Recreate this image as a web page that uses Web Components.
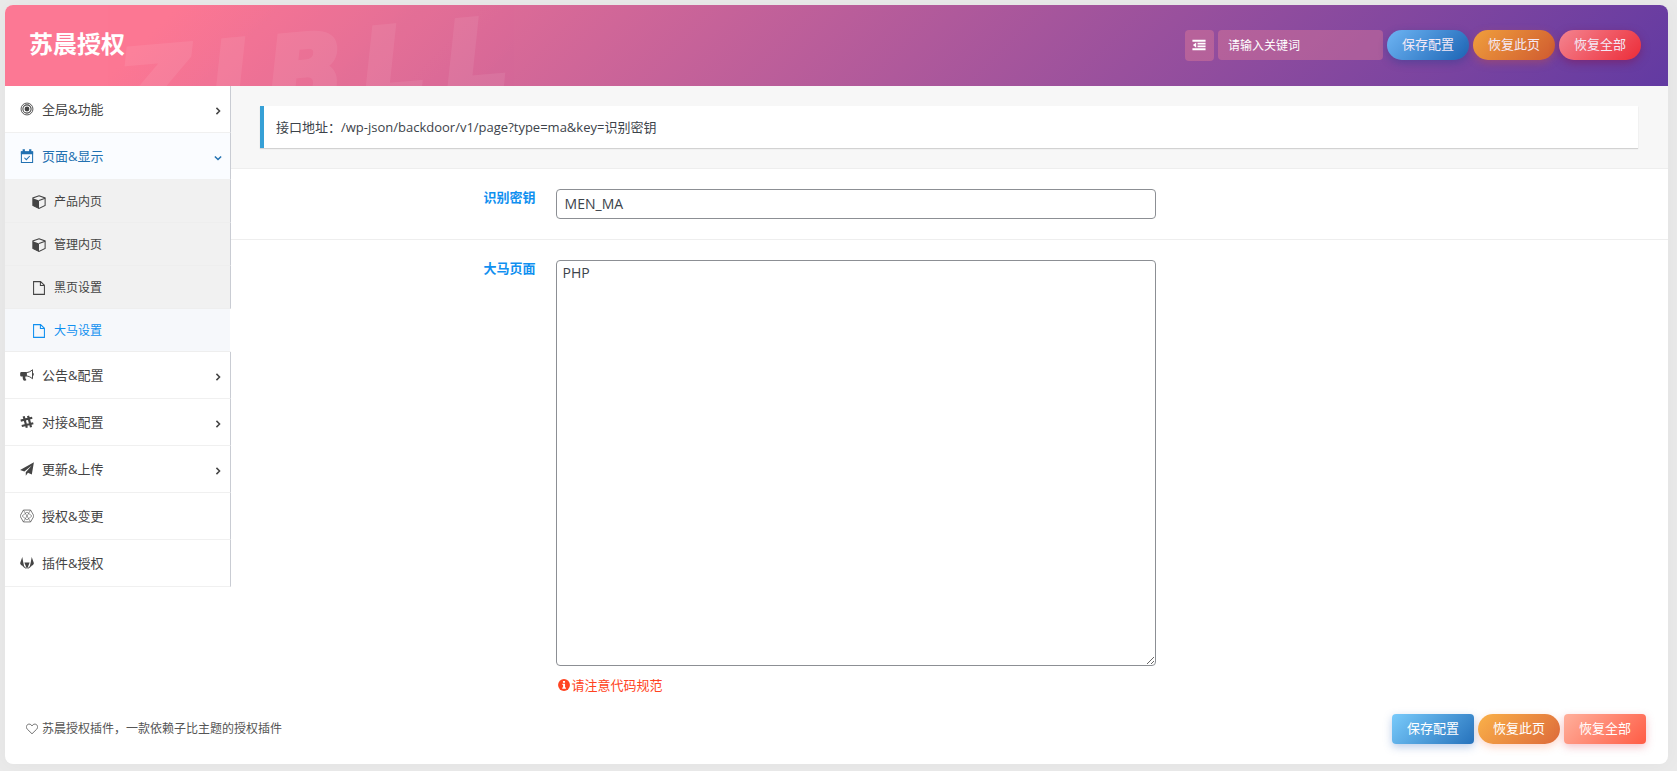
<!DOCTYPE html>
<html lang="zh-CN">
<head>
<meta charset="utf-8">
<title>苏晨授权</title>
<style>
html{background:#eaeaea}
body{margin:0;padding:5px 9px 7px 5px;font-family:"Open Sans","Noto Sans CJK SC",sans-serif;font-size:13px;line-height:18px;color:#444}
</style>
</head>
<body>
<settings-app></settings-app>
<script>
const ICONS = {
  target:'<g fill="none" stroke="currentColor"><circle cx="8" cy="8" r="6.800" stroke-width="1"/><circle cx="8" cy="8" r="4.700" stroke-width="1.200"/></g><circle cx="8" cy="8" r="2.800" fill="currentColor"/>',
  calendar:'<path d="M1.600 3.500h12.800v11.900H1.600z" fill="none" stroke="currentColor" stroke-width="1.200"/><path d="M1 2.600h14v3.400H1zM3 .4h2.600v3H3zM10.400.4H13v3h-2.600z" fill="currentColor"/><path d="M5 10l2.200 2.200L11.200 8" fill="none" stroke="currentColor" stroke-width="1.200"/>',
  cube:'<path d="M8 .9l7 2.500v8.600L8 15.300 1 12V3.400z" fill="none" stroke="currentColor" stroke-width="1.200"/><path d="M1 3.600L8 6.300v9L1 12z" fill="currentColor"/><path d="M8 6.300l7-2.700" stroke="currentColor" stroke-width="1.200"/>',
  file:'<path d="M1.800.7h8l4.400 4.200v10.400H1.800zM9.600.7v4.400h4.600" fill="none" stroke="currentColor" stroke-width="1.200"/>',
  horn:'<path d="M14.300 2v10.300C12 10.300 9.800 9.300 7.200 9V5.300c2.600-.3 4.800-1.200 7.100-3.300z" fill="none" stroke="currentColor" stroke-width="1.100"/><path d="M14 6h1.700v2.500H14zM7.500 4.700v5H6.100c-.3 1.600.2 2.600 1.300 4-.8.9-2.700.9-3.500.4-.7-1.600-1-2.800-.7-4.400H1.900C1 9.700.2 9 .2 8.200V6.100c0-.8.800-1.400 1.700-1.400z" fill="currentColor"/>',
  hash:'<path d="M.8 6.400L14 3.200M2 12.600l13.200-3.200M4.200 1.400l3.600 13.200M9.200 1l3.400 13" fill="none" stroke="currentColor" stroke-width="2.500"/>',
  plane:'<path d="M15.900.4L13.500 14.200l-4.400-1.800-2.500 3.200v-4L13.400 4 5 10.900.1 9z" fill="currentColor"/>',
  hex:'<g fill="none" stroke="currentColor" stroke-width=".8"><path d="M3.900 1.200h8.200L16 8l-3.900 6.800H3.900L0 8z"/><path d="M3.900 1.200l8.200 13.600M12.100 1.200L3.900 14.800M2.400 8L8 3.500 13.600 8 8 12.500z" stroke-width=".6"/></g>',
  fox:'<path d="M2.600 1.200L.1 8.200l1 2.200 3.800 2L3.700 7.200zM13.400 1.200l2.500 7-1 2.200-3.800 2 1.200-5.200zM5 7.400h6L8 15.200zM2.600 11.600l4.600 3.300-1.300-2.600zM13.400 11.600l-4.600 3.300 1.300-2.600z" fill="currentColor"/>',
  heart:'<path d="M8 14.400L1.700 8.200C-1 5.200 1.200 1.500 4.200 1.500 6 1.500 7.200 2.600 8 4c.8-1.400 2-2.500 3.800-2.500 3 0 5.200 3.700 2.500 6.700z" fill="none" stroke="currentColor" stroke-width="1.100"/>',
  info:'<circle cx="8" cy="8" r="7.900" fill="currentColor"/><path d="M6.600 2.600h2.800v2.300H6.600zM5.800 6.300h3.600v5h1.200V13H5.600v-1.700h1.200V8h-1z" fill="#fff"/>',
  outdent:'<path d="M.5 2h15v2.200H.5zM6.300 5.400h9.200v2H6.300zM6.300 8.600h9.200v2H6.300zM.5 11.800h15V14H.5zM4.800 5v6L1 8z" fill="currentColor"/>',
  right:'<path d="M5.500 3l5 5-5 5" fill="none" stroke="currentColor" stroke-width="2.400"/>',
  down:'<path d="M3 5.500l5 5 5-5" fill="none" stroke="currentColor" stroke-width="2.400"/>'
};
const define = (name, render) => customElements.define(name, class extends HTMLElement {
  constructor(){ super(); this.attachShadow({mode:'open'}); }
  connectedCallback(){ this.shadowRoot.innerHTML = render(this); }
});

define('ui-icon', el => `<style>
:host{display:inline-flex;flex:none;width:14px;height:14px}
svg{width:100%;height:100%;display:block}
</style><svg viewBox="0 0 16 16" aria-hidden="true">${ICONS[el.getAttribute('name')]}</svg>`);

define('ui-button', el => `<style>
:host{display:block}
button{box-sizing:border-box;display:block;height:30px;padding:0 15px 2px;border:0;border-radius:var(--r,30px);background:var(--bg);box-shadow:0 3px 8px var(--glow);color:var(--ink,#f4e9f6);font:inherit;line-height:28px;white-space:nowrap;cursor:pointer}
</style><button type="button"><slot></slot></button>`);

define('app-header', () => `<style>
:host{position:relative;display:flex;align-items:center;justify-content:space-between;height:81px;padding:0 27px 0 24px;overflow:hidden;background:linear-gradient(135deg,#fc7894 10%,#623aa2 100%);color:#fff}
.mark{position:absolute;left:114px;top:9px;display:flex;gap:19px;font-family:"DejaVu Sans",sans-serif;font-size:100px;line-height:116px;font-weight:700;font-style:italic;color:#fff;-webkit-text-stroke:5px #fff;opacity:.07;transform:rotate(-5deg);pointer-events:none}
h1{position:relative;margin:0 0 4px;font-size:24px;line-height:32px;font-weight:700}
form{position:relative;display:flex;gap:4px;margin-bottom:1px}
.fold{box-sizing:border-box;width:29px;height:31px;padding:0;border:0;border-radius:4px;color:#fff;display:grid;place-items:center}
.fold,input{background:rgba(255,140,150,.32)}
input{box-sizing:border-box;width:165px;height:30px;padding:2px 10px 0;border:0;border-radius:4px;font:inherit;font-size:12px;color:#fff}
input::placeholder{color:#fff;opacity:1}
.save{--bg:linear-gradient(135deg,#6eb5f4,#1c64b4);--glow:rgba(30,60,140,.4)}
.page{--bg:linear-gradient(135deg,#f09f3c,#cf5a30);--glow:rgba(200,80,60,.4)}
.all{--bg:linear-gradient(135deg,#f48490,#ec2c38);--glow:rgba(130,20,80,.5)}
</style>
<div class="mark" aria-hidden="true"><span>Z</span><span>I</span><span>B</span><span>L</span><span>L</span></div>
<h1>苏晨授权</h1>
<form><button class="fold" type="button" aria-label="展开"><ui-icon name="outdent"></ui-icon></button>
<input type="search" placeholder="请输入关键词" aria-label="请输入关键词">
<ui-button class="save">保存配置</ui-button><ui-button class="page">恢复此页</ui-button><ui-button class="all">恢复全部</ui-button></form>`);

define('nav-item', el => `<style>
:host{display:block}
a{box-sizing:border-box;display:flex;align-items:center;gap:8px;height:47px;padding:0 7px 0 15px;border-bottom:1px solid #f0f0f0;border-right:1px solid #c9ccd3;background:#fff;color:#444;text-decoration:none}
span{flex:1}
.arrow{width:10px;height:10px;margin-top:4px}
:host([open]) a{background:#fafcff;color:#2271b1}
:host([sub]) a{height:43px;padding:2px 7px 0 27px;font-size:12px;background:#f1f1f1;border-bottom-color:#eee}
:host([active]) a{background:#f6f8fb;color:#1090f0;border-right-color:transparent;background-clip:padding-box;border-bottom-color:#eee}
</style><a href="#"><ui-icon name="${el.getAttribute('icon')}"></ui-icon><span><slot></slot></span>${el.hasAttribute('arrow')?`<ui-icon class="arrow" name="${el.getAttribute('arrow')}"></ui-icon>`:''}</a>`);

define('side-nav', () => `<style>:host{display:block}nav{display:block}</style><nav>
<nav-item icon="target" arrow="right">全局&amp;功能</nav-item>
<nav-item icon="calendar" arrow="down" open>页面&amp;显示</nav-item>
<nav-item icon="cube" sub>产品内页</nav-item>
<nav-item icon="cube" sub>管理内页</nav-item>
<nav-item icon="file" sub>黑页设置</nav-item>
<nav-item icon="file" sub active>大马设置</nav-item>
<nav-item icon="horn" arrow="right">公告&amp;配置</nav-item>
<nav-item icon="hash" arrow="right">对接&amp;配置</nav-item>
<nav-item icon="plane" arrow="right">更新&amp;上传</nav-item>
<nav-item icon="hex">授权&amp;变更</nav-item>
<nav-item icon="fox">插件&amp;授权</nav-item></nav>`);

define('notice-box', () => `<style>
:host{display:block;padding:20px 30px;background:#f7f7f7;border-bottom:1px solid #eee}
p{margin:0;padding:12px;border-left:4px solid #36a0d6;background:#fff;box-shadow:0 1px 1px rgba(0,0,0,.15);color:#3c434a}
</style><p><slot></slot></p>`);

define('form-field', el => `<style>
:host{display:flex;gap:20px;padding:20px 30px;border-bottom:1px solid #eee}
:host(:last-of-type){border-bottom:0}
label{flex:0 0 20%;line-height:16px;text-align:right;font-weight:700;color:#1090f0}
.body{flex:1;min-width:0}
input,textarea{box-sizing:border-box;display:block;width:100%;max-width:600px;margin:0;border:1px solid #8c8f94;border-radius:4px;background:#fff;color:#3c434a;font:inherit;font-size:14px;line-height:20px}
input{height:30px;padding:0 8px 2px}
textarea{height:406px;padding:2px 6px;resize:vertical}
.hint{display:flex;align-items:center;gap:2px;margin:10px 0 0;padding-left:2px;color:#ff4321}
.hint ui-icon{width:12px;height:12px}
</style><label for="f">${el.getAttribute('label')}</label><div class="body">${el.hasAttribute('multiline')
 ? `<textarea id="f">${el.getAttribute('value')}</textarea>` : `<input id="f" type="text" value="${el.getAttribute('value')}">`}
${el.hasAttribute('hint')?`<p class="hint"><ui-icon name="info"></ui-icon>${el.getAttribute('hint')}</p>`:''}</div>`);

define('app-footer', () => `<style>
:host{display:flex;align-items:center;justify-content:space-between;padding:0 22px 20px 21px;color:#555;font-size:12px}
p{display:flex;align-items:center;gap:4px;margin:0}
p ui-icon{width:12px;height:12px}
div{display:flex;gap:4px;font-size:13px}
ui-button{--ink:#fff}
.save{--r:4px;--bg:linear-gradient(135deg,#79cbfb,#2672bc);--glow:rgba(60,110,190,.35)}
.page{--bg:linear-gradient(135deg,#fab149,#dd6a3a);--glow:rgba(250,120,80,.3)}
.all{--r:4px;--bg:linear-gradient(135deg,#ffb09c,#ff5c45);--glow:rgba(220,80,100,.35)}
</style><p><ui-icon name="heart"></ui-icon>苏晨授权插件，一款依赖子比主题的授权插件</p>
<div><ui-button class="save">保存配置</ui-button><ui-button class="page">恢复此页</ui-button><ui-button class="all">恢复全部</ui-button></div>`);

define('settings-app', () => `<style>
:host{display:block;border-radius:8px;overflow:hidden;background:#fff;box-shadow:0 0 20px rgba(0,0,0,.04)}
.wrap{display:flex;align-items:flex-start}
side-nav{flex:0 0 226px;margin-right:-1px;position:relative}
main{flex:1;min-width:0}
</style><app-header></app-header><div class="wrap"><side-nav></side-nav><main>
<notice-box>接口地址：/wp-json/backdoor/v1/page?type=ma&amp;key=识别密钥</notice-box>
<form-field label="识别密钥" value="MEN_MA"></form-field>
<form-field label="大马页面" value="PHP" multiline hint="请注意代码规范"></form-field>
</main></div><app-footer></app-footer>`);
</script>
</body>
</html>
